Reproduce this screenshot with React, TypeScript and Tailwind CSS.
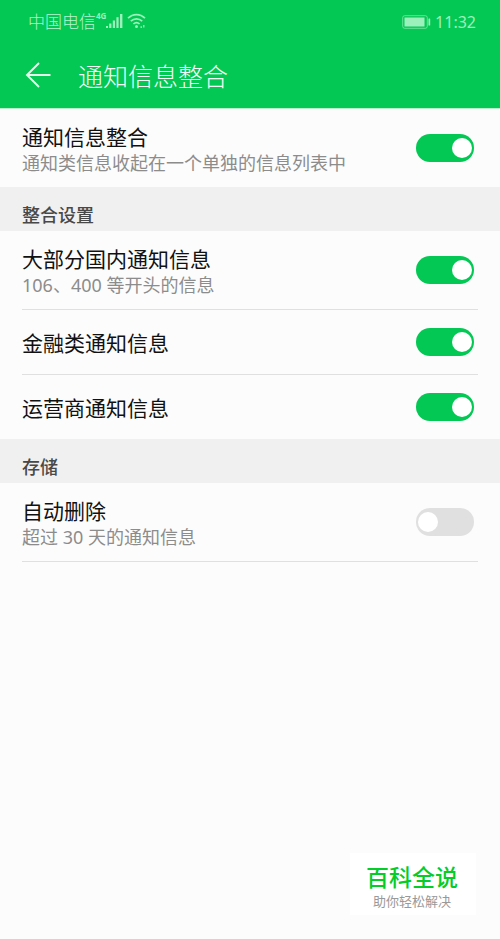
import React, { useState } from 'react';

interface RowProps {
  id: string;
  title: string;
  detail?: string;
  divider?: boolean;
  checked: boolean;
  onToggle: (id: string) => void;
}

const SettingRow: React.FC<RowProps> = ({ id, title, detail, divider, checked, onToggle }) => (
  <div className="px-[22px]">
    <div
      className={`flex items-center justify-between gap-4 pr-1 ${detail ? 'h-[78px]' : 'h-16'} ${
        divider ? 'border-b border-[#e0e0e0] box-content' : ''
      }`}
    >
      <div className="min-w-0 pt-0.5">
        <label htmlFor={id} className="block text-[21px] leading-7 text-[#111111]">
          {title}
        </label>
        {detail && (
          <p id={`${id}-detail`} className="text-lg leading-6 text-[#8c8c8c]">
            {detail}
          </p>
        )}
      </div>
      <input
        id={id}
        type="checkbox"
        role="switch"
        checked={checked}
        onChange={() => onToggle(id)}
        aria-describedby={detail ? `${id}-detail` : undefined}
        className="flex h-7 w-[58px] shrink-0 cursor-pointer appearance-none items-center rounded-full bg-[#e0e0e0] px-0.5 before:block before:size-5 before:rounded-full before:bg-white before:content-[''] checked:justify-end checked:bg-[#04c854]"
      />
    </div>
  </div>
);

const SectionTitle: React.FC<{ children: React.ReactNode }> = ({ children }) => (
  <h2 className="flex h-11 items-end bg-[#f0f0f0] px-[22px] pb-1 text-lg leading-6 font-medium text-[#484848]">
    {children}
  </h2>
);

const StatusBar: React.FC = () => (
  <div className="flex h-11 items-center justify-between pr-6 pl-7 text-base text-[#9cf0bc]">
    <div className="flex items-center">
      <span className="text-[17px] font-light text-[#b4f5cd]">中国电信</span>
      <span className="self-start pt-px text-[8px] leading-3 font-bold">4G</span>
      <svg className="-mt-0.5" width="17" height="16" viewBox="0 0 17 16" fill="currentColor" aria-hidden="true">
        <rect x="0" y="13" width="2" height="2" />
        <rect x="3.2" y="10.5" width="2.2" height="4.5" />
        <rect x="6.8" y="7.5" width="2.2" height="7.5" />
        <rect x="10.4" y="4.2" width="2.2" height="10.8" />
        <rect x="14" y="1" width="2.4" height="14" />
      </svg>
      <svg className="-mt-0.5 ml-1" width="20" height="16" viewBox="0 0 20 16" fill="none" stroke="currentColor" strokeWidth="1.7" aria-hidden="true">
        <path d="M1 5.2C5.8.4 13.2.4 18 5.2" />
        <path d="M3.8 8.2C7.1 5 11.9 5 15.2 8.2" />
        <path d="M6.4 11C8.3 9.2 10.7 9.2 12.6 11" />
        <circle cx="9.5" cy="13.5" r="1.5" fill="currentColor" stroke="none" />
        <path d="M14.2 13.2v1.8M16.8 12v2.4" strokeWidth="1.3" />
      </svg>
    </div>
    <div className="flex items-center gap-1">
      <svg width="29" height="14" viewBox="0 0 29 14" aria-hidden="true">
        <rect x="0.7" y="0.7" width="24.6" height="12.6" rx="2" fill="none" stroke="currentColor" strokeOpacity="0.65" />
        <rect x="2.5" y="2.5" width="20" height="9" fill="currentColor" />
        <rect x="26.5" y="3.5" width="1.7" height="7" rx="0.5" fill="currentColor" />
      </svg>
      <span>11:32</span>
    </div>
  </div>
);

const App: React.FC = () => {
  const [settings, setSettings] = useState<Record<string, boolean>>({
    merge: true,
    domestic: true,
    finance: true,
    carrier: true,
    autoDelete: false
  });

  const toggle = (id: string) => setSettings((prev) => ({ ...prev, [id]: !prev[id] }));

  return (
    <div className="relative min-h-screen bg-[#fcfcfc] font-['Noto_Sans','Noto_Sans_CJK_SC',sans-serif]">
      <header className="border-b border-[#b5efcb] bg-[#04c854]">
        <StatusBar />
        <div className="flex h-16 items-center gap-[26px] px-6">
          <button type="button" aria-label="返回" className="text-[#e4fbec]">
            <svg width="28" height="28" viewBox="0 0 28 28" fill="none" stroke="currentColor" strokeWidth="1.9" aria-hidden="true">
              <path d="M26.5 13H3M15 1L3 13L15 25" />
            </svg>
          </button>
          <h1 className="text-[25px] leading-8 font-light text-[#f4fff8]">通知信息整合</h1>
        </div>
      </header>

      <main>
        <SettingRow
          id="merge"
          title="通知信息整合"
          detail="通知类信息收起在一个单独的信息列表中"
          checked={settings.merge}
          onToggle={toggle}
        />
        <SectionTitle>整合设置</SectionTitle>
        <SettingRow
          id="domestic"
          title="大部分国内通知信息"
          detail="106、400 等开头的信息"
          divider
          checked={settings.domestic}
          onToggle={toggle}
        />
        <SettingRow id="finance" title="金融类通知信息" divider checked={settings.finance} onToggle={toggle} />
        <SettingRow id="carrier" title="运营商通知信息" checked={settings.carrier} onToggle={toggle} />
        <SectionTitle>存储</SectionTitle>
        <SettingRow
          id="autoDelete"
          title="自动删除"
          detail="超过 30 天的通知信息"
          divider
          checked={settings.autoDelete}
          onToggle={toggle}
        />
      </main>

      <div className="absolute right-6 bottom-6 bg-white pt-2 pr-[18px] pb-1.5 pl-4 text-center">
        <p className="text-[23px] leading-8 font-medium text-[#04cc28]">百科全说</p>
        <p className="text-[13px] leading-4 text-[#999999]">助你轻松解决</p>
      </div>
    </div>
  );
};

export default App;
